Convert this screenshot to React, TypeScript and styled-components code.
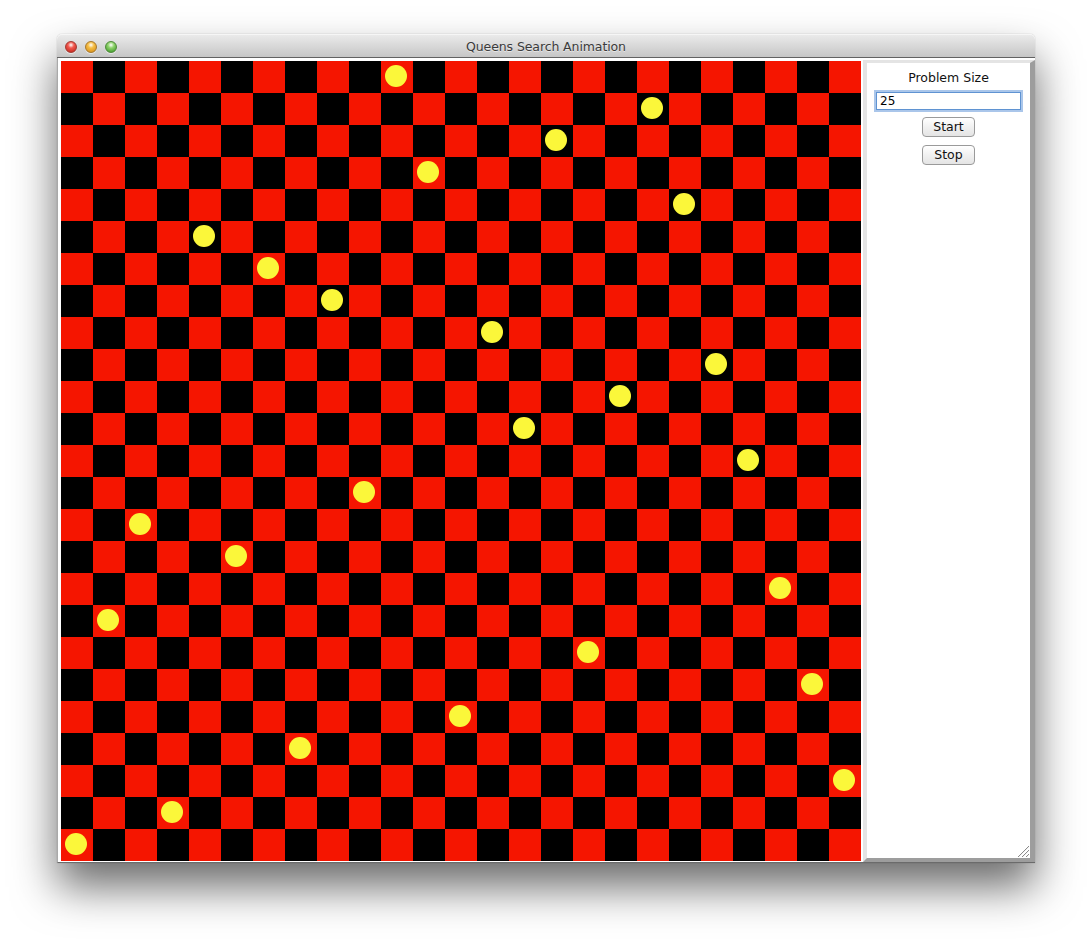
import React from "react";
import styled, { createGlobalStyle } from "styled-components";

const GlobalStyle = createGlobalStyle`
  html, body { margin: 0; padding: 0; background: #ffffff; }
  body { font-family: "DejaVu Sans", "Liberation Sans", sans-serif; }
`;

const N = 25;
const CELL = 32;
const QUEENS = [10, 18, 15, 11, 19, 4, 6, 8, 13, 20, 17, 14, 21, 9, 2, 5, 22, 1, 16, 23, 12, 7, 24, 3, 0];

const Page = styled.div`
  width: 1092px;
  height: 942px;
  padding: 34px 0 0 57px;
  box-sizing: border-box;
  overflow: hidden;
`;

const Window = styled.div`
  width: 978px;
  border-radius: 5px 5px 0 0;
  box-shadow: 0 24px 44px rgba(0, 0, 0, 0.58), 0 0 1px rgba(0, 0, 0, 0.4);
  background: #ffffff;
`;

const TitleBar = styled.div`
  height: 23px;
  display: grid;
  grid-template-columns: 1fr auto 1fr;
  align-items: center;
  background: linear-gradient(#ececec, #d9d9d9 50%, #c6c6c6);
  border-radius: 5px 5px 0 0;
  border-bottom: 1px solid #626262;
  box-shadow: inset 0 1px 0 #f6f6f6;
`;

const Lights = styled.div`
  display: flex;
  gap: 8px;
  padding-left: 8px;
  padding-top: 2px;
`;

const Light = styled.span<{ $c1: string; $c2: string; $edge: string }>`
  width: 12px;
  height: 12px;
  border-radius: 50%;
  box-sizing: border-box;
  border: 1px solid ${(p) => p.$edge};
  background: radial-gradient(circle at 50% 30%, #ffffff 0, ${(p) => p.$c1} 35%, ${(p) => p.$c2} 90%);
  box-shadow: 0 1px 1px rgba(255, 255, 255, 0.6);
`;

const Title = styled.div`
  font-family: "DejaVu Sans", sans-serif;
  font-size: 12.5px;
  color: #3b3b3b;
  text-shadow: 0 1px 0 rgba(255, 255, 255, 0.5);
  letter-spacing: -0.1px;
  padding-top: 1px;
`;

const Content = styled.div`
  display: flex;
  height: 804px;
  background: #ffffff;
  border-left: 1px solid #a9a9a9;
  border-bottom: 1px solid #6b6b6b;
`;

const BoardWrap = styled.div`
  padding: 3px 2px 0 3px;
  overflow: hidden;
`;

const Board = styled.div`
  display: grid;
  grid-template-columns: repeat(${N}, ${CELL}px);
  grid-auto-rows: ${CELL}px;
  width: ${N * CELL}px;
`;

const Cell = styled.div<{ $red: boolean }>`
  background: ${(p) => (p.$red ? "#f51500" : "#000000")};
  position: relative;
`;

const Queen = styled.div`
  position: absolute;
  left: 4px;
  top: 4px;
  width: 22px;
  height: 22px;
  border-radius: 50%;
  background: #fbf73a;
`;

const SidePanel = styled.div`
  position: relative;
  width: 172px;
  margin-top: 2px;
  box-sizing: border-box;
  border-style: solid;
  border-width: 3px 5px 4px 4px;
  border-color: #e4e4e4 #9d9d9d #9d9d9d #e4e4e4;
  display: flex;
  flex-direction: column;
  align-items: center;
`;

const Label = styled.div`
  margin-top: 7px;
  height: 16px;
  line-height: 16px;
  font-size: 12.5px;
  color: #111;
`;

const Field = styled.div`
  margin-top: 6px;
  width: 140px;
  height: 16px;
  box-sizing: content-box;
  border: 1px solid #5f93d2;
  box-shadow: 0 0 0 2px rgba(125, 168, 222, 0.65);
  font-size: 12px;
  line-height: 16px;
  padding: 0 0 0 3px;
  color: #000;
  background: #fff;
`;

const Button = styled.div<{ $top: number }>`
  margin-top: ${(p) => p.$top}px;
  width: 53px;
  height: 20px;
  box-sizing: border-box;
  border: 1px solid #9a9a9a;
  border-radius: 4px;
  background: linear-gradient(#ffffff, #f1f1f1 50%, #e4e4e4);
  font-size: 12.5px;
  line-height: 18px;
  text-align: center;
  color: #111;
`;

const Grip = styled.svg`
  position: absolute;
  right: 0;
  bottom: 0;
`;

export default function App() {
  const cells = [];
  for (let r = 0; r < N; r++) {
    for (let c = 0; c < N; c++) {
      cells.push(
        <Cell key={`${r}-${c}`} $red={(r + c) % 2 === 0}>
          {QUEENS[r] === c && <Queen />}
        </Cell>
      );
    }
  }
  return (
    <>
      <GlobalStyle />
      <Page>
        <Window>
          <TitleBar>
            <Lights>
              <Light $c1="#f2594f" $c2="#c4271d" $edge="#a33a33" />
              <Light $c1="#f5be45" $c2="#d8901a" $edge="#a7782c" />
              <Light $c1="#8fd36b" $c2="#3f9a2a" $edge="#4f8a3a" />
            </Lights>
            <Title>Queens Search Animation</Title>
            <div />
          </TitleBar>
          <Content>
            <BoardWrap>
              <Board>{cells}</Board>
            </BoardWrap>
            <SidePanel>
              <Label>Problem Size</Label>
              <Field>25</Field>
              <Button $top={7}>Start</Button>
              <Button $top={8}>Stop</Button>
              <Grip width="13" height="13" viewBox="0 0 13 13">
                <path d="M1 12 L12 1 M5 12 L12 5 M9 12 L12 9" stroke="#8a8a8a" strokeWidth="1" />
                <path d="M2 12 L12 2 M6 12 L12 6 M10 12 L12 10" stroke="#f4f4f4" strokeWidth="1" />
              </Grip>
            </SidePanel>
          </Content>
        </Window>
      </Page>
    </>
  );
}
